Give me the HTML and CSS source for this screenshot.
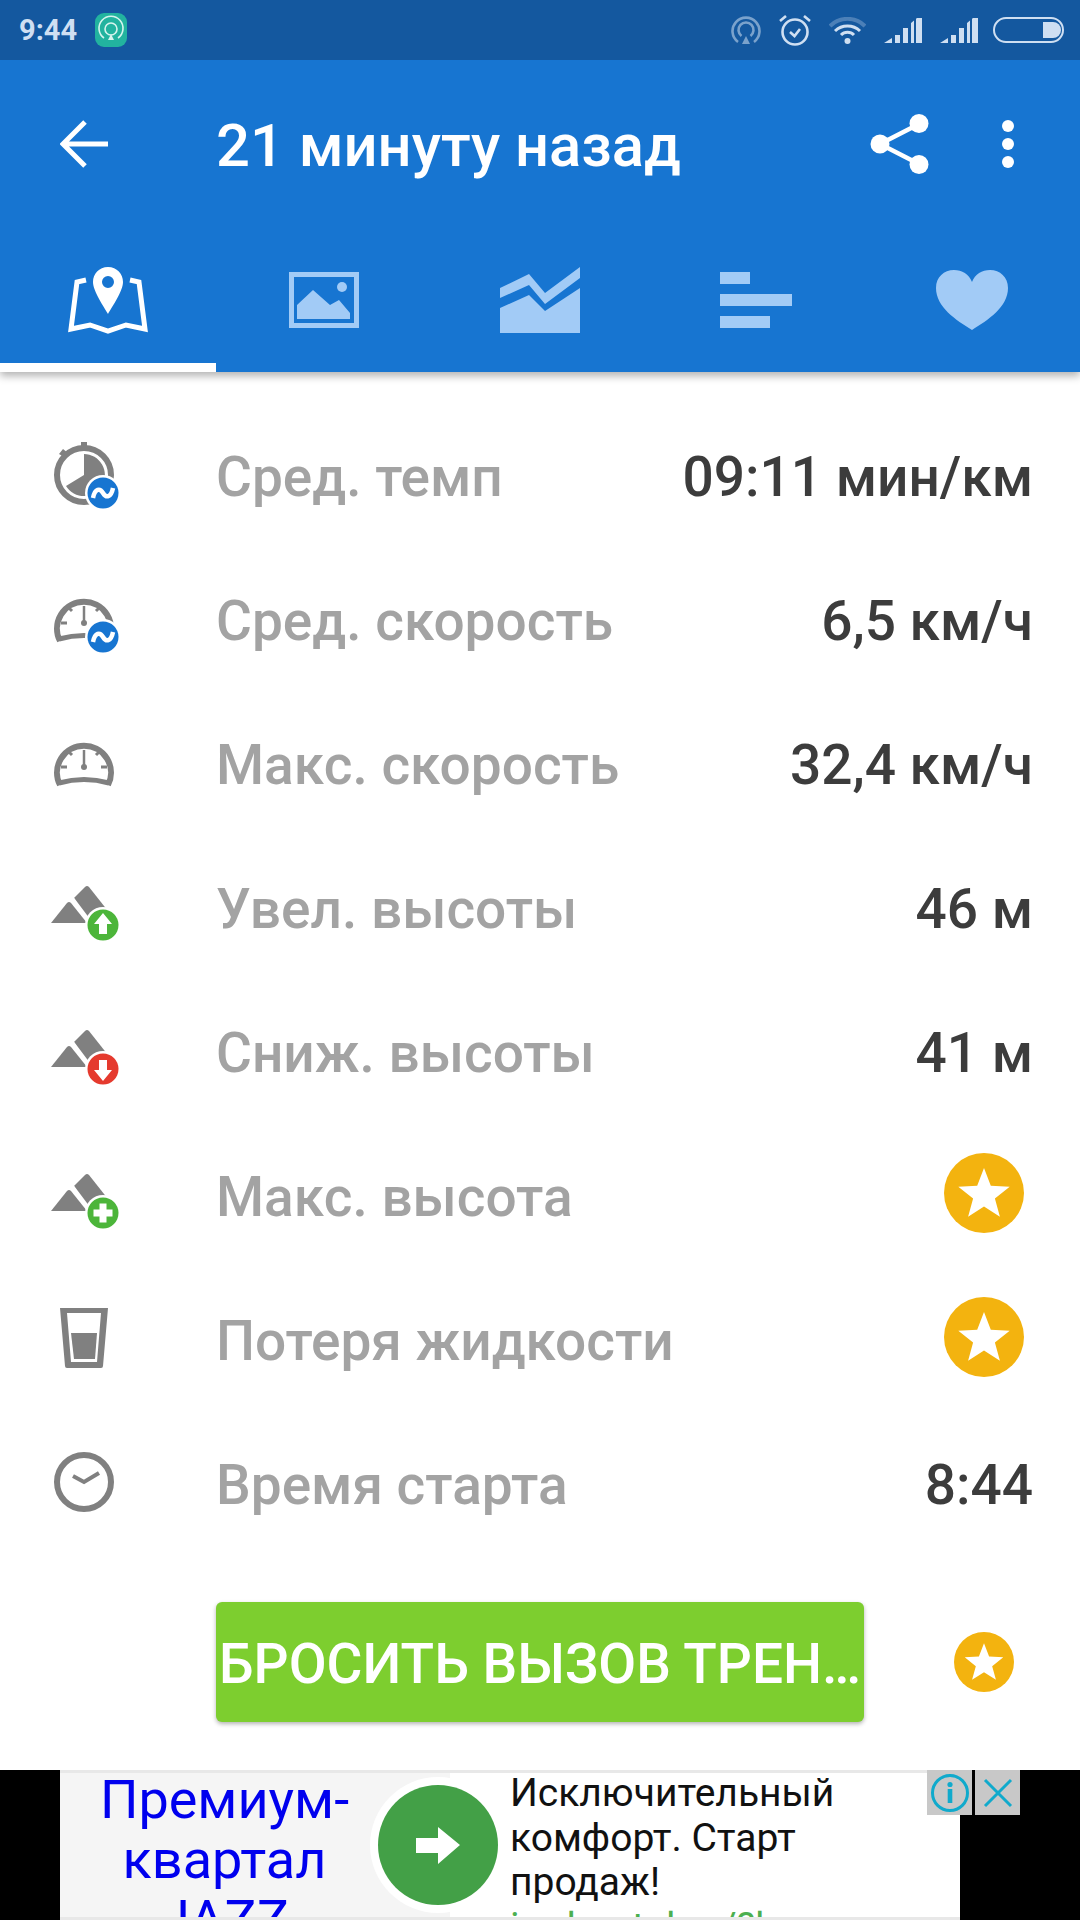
FILE: index.html
```html
<!DOCTYPE html>
<html lang="ru">
<head>
  <meta charset="UTF-8" />
  <meta name="viewport" content="width=device-width, initial-scale=1.0" />
  <title>21 минуту назад</title>
  <link rel="stylesheet" href="styles.css">
</head>
<body>
  <svg class="defs" width="0" height="0">
    <symbol id="gauge" viewBox="0 0 72 72">
      <path d="M12 55 A27 27 0 1 1 60 55" fill="none" stroke="#808080" stroke-width="6"/>
      <path d="M11 53 Q36 46 61 53" fill="none" stroke="#808080" stroke-width="5"/>
      <path d="M36 13V18 M13 37H19 M53 37H59 M20 21L24 25 M52 21L48 25" stroke="#808080" stroke-width="3"/>
      <path d="M36 20V36" stroke="#808080" stroke-width="2.5"/>
      <circle cx="36" cy="37" r="3" fill="#808080"/>
    </symbol>
    <symbol id="mountain" viewBox="0 0 72 72">
      <path d="M26 24 L37 13 Q39 11 41 13 L60 37 L42 50 Z" fill="#808080"/>
      <path d="M19 29 Q21 27 23 29 L39 49 H3 Z" fill="#808080"/>
      <path d="M25 25 L43 49" stroke="#fff" stroke-width="3"/>
    </symbol>
    <symbol id="wave" viewBox="0 0 72 72">
      <circle cx="55" cy="51" r="18" fill="#fff"/>
      <circle cx="55" cy="51" r="15.5" fill="#1775d1"/>
      <path d="M45 56 C47 46 52 46 55 51 C58 56 63 56 65 46" fill="none" stroke="#fff" stroke-width="4.5"/>
    </symbol>
    <symbol id="star" viewBox="0 0 80 80">
      <circle cx="40" cy="40" r="40" fill="#f3b30f"/>
      <polygon fill="#fff" points="40,15 46.8,32.7 65.7,33.7 50.9,45.6 55.9,63.8 40,53.5 24.1,63.8 29.1,45.6 14.3,33.7 33.2,32.7"/>
    </symbol>
    <symbol id="signal" viewBox="0 0 38 25">
      <path d="M0 25 L8 20 V25 Z M11 17 H16 V25 H11 Z M19 10 H24 V25 H19 Z M27 5 L33 0 H38 V25 H27 Z" fill="#cfdff2"/>
      <path d="M31 0 V25" stroke="#14589f" stroke-width="2"/>
    </symbol>
  </svg>

  <div class="app">
    <header class="appbar">
      <div class="statusbar">
        <span class="time">9:44</span>
        <svg class="notif" width="32" height="34" viewBox="0 0 32 34">
          <rect width="32" height="34" rx="9" fill="#22b39f"/>
          <path d="M9 25 A12 12 0 1 1 23 25" fill="none" stroke="#d6f4ee" stroke-width="1.6"/>
          <circle cx="16" cy="16" r="6" fill="none" stroke="#d6f4ee" stroke-width="1.6"/>
          <path d="M13 27 L16 21 L19 27 Z" fill="#d6f4ee"/>
        </svg>
        <div class="status-icons">
          <svg width="30" height="30" viewBox="0 0 30 30" class="dim">
            <path d="M7 27 A13.5 13.5 0 1 1 23 27" fill="none" stroke="#cfdff2" stroke-width="2.6"/>
            <path d="M10.5 21 A7.5 7.5 0 1 1 19.5 21" fill="none" stroke="#cfdff2" stroke-width="2.6"/>
            <path d="M11 29 L15 21 L19 29 Z" fill="#cfdff2"/>
          </svg>
          <svg width="32" height="32" viewBox="0 0 32 32">
            <circle cx="16" cy="18" r="12.5" fill="none" stroke="#cfdff2" stroke-width="2.6"/>
            <path d="M11 18 L15.5 22 L21 15 M1 7 L7 2 M25 2 L31 7" fill="none" stroke="#cfdff2" stroke-width="2.6"/>
          </svg>
          <svg width="37" height="27" viewBox="0 0 37 27">
            <path d="M1 9 A25 25 0 0 1 36 9" fill="none" stroke="#cfdff2" stroke-width="4" opacity=".3"/>
            <path d="M6 14 A18 18 0 0 1 31 14 M12 18 A9 9 0 0 1 25 18" fill="none" stroke="#cfdff2" stroke-width="3"/>
            <circle cx="18.5" cy="24" r="3" fill="#cfdff2"/>
          </svg>
          <svg width="38" height="25"><use href="#signal"/></svg>
          <svg width="38" height="25"><use href="#signal"/></svg>
          <svg class="battery" width="71" height="26" viewBox="0 0 71 26">
            <rect x="1" y="1" width="69" height="24" rx="12" fill="none" stroke="#cfdff2" stroke-width="2"/>
            <path d="M50 5 H60 A8 8 0 0 1 60 21 H50 Z" fill="#cfdff2"/>
          </svg>
        </div>
      </div>

      <div class="toolbar">
        <svg class="back" width="48" height="48" viewBox="0 0 48 48">
          <path d="M48 24H3 M25 2 L3 24 L25 46" fill="none" stroke="#fff" stroke-width="5"/>
        </svg>
        <h1 class="title">21 минуту назад</h1>
        <svg class="share" width="60" height="62" viewBox="0 0 60 62">
          <path d="M49 11 L10 31 L49 51" fill="none" stroke="#fff" stroke-width="4.5"/>
          <circle cx="49" cy="10.5" r="9.5" fill="#fff"/>
          <circle cx="10" cy="31" r="9.5" fill="#fff"/>
          <circle cx="49" cy="51.5" r="9.5" fill="#fff"/>
        </svg>
        <svg class="more" width="12" height="48" viewBox="0 0 12 48">
          <circle cx="6" cy="6" r="6" fill="#fff"/>
          <circle cx="6" cy="24" r="6" fill="#fff"/>
          <circle cx="6" cy="42" r="6" fill="#fff"/>
        </svg>
      </div>

      <nav class="tabs">
        <div class="tab active">
          <svg width="80" height="70" viewBox="0 0 80 70">
            <path d="M18 15 L9 17 L3 64 L22 60 L40 66 L58 60 L77 64 L71 17 L62 15" fill="none" stroke="#fff" stroke-width="5"/>
            <path fill-rule="evenodd" fill="#fff" d="M40 2 C31 2 25 9 25 17 C25 26 36 42 40 49 C44 42 55 26 55 17 C55 9 49 2 40 2 Z M40 11 A6 6 0 1 1 40 23 A6 6 0 1 1 40 11 Z"/>
          </svg>
        </div>
        <div class="tab">
          <svg width="70" height="56" viewBox="0 0 70 56">
            <rect x="2.5" y="2.5" width="65" height="51" fill="none" stroke="#a2cbf6" stroke-width="5"/>
            <circle cx="53" cy="15" r="5" fill="#a2cbf6"/>
            <path d="M8 33 L24 18 L41 33 L50 28 L61 41 V47 H8 Z" fill="#a2cbf6"/>
          </svg>
        </div>
        <div class="tab">
          <svg width="80" height="66" viewBox="0 0 80 66">
            <path d="M0 21 L29 7 L45 26 L80 0 V11 L45 37 L29 18 L0 31 Z" fill="#a2cbf6"/>
            <path d="M0 41 L29 28 L45 44 L80 21 V66 H0 Z" fill="#a2cbf6"/>
          </svg>
        </div>
        <div class="tab">
          <svg width="72" height="56" viewBox="0 0 72 56">
            <path d="M0 0H30V12H0Z M0 22H72V34H0Z M0 44H50V56H0Z" fill="#a2cbf6"/>
          </svg>
        </div>
        <div class="tab">
          <svg width="72" height="60" viewBox="0 0 72 60">
            <path d="M36 60 C20 50 0 37 0 18 C0 7 8 0 18 0 C26 0 33 4 36 12 C39 4 46 0 54 0 C64 0 72 7 72 18 C72 37 52 50 36 60 Z" fill="#a2cbf6"/>
          </svg>
        </div>
      </nav>
    </header>

    <main class="stats">
      <div class="stat-row">
        <div class="stat-icon">
          <svg width="72" height="72" viewBox="0 0 72 72">
            <circle cx="36" cy="33" r="27" fill="none" stroke="#808080" stroke-width="6"/>
            <path d="M33 0H39V6H33Z M11 12 L15 7 L20 11 L16 15 Z" fill="#808080"/>
            <path d="M36 12 A21 21 0 1 1 18 44 L36 33 Z" fill="#808080"/>
            <use href="#wave"/>
          </svg>
        </div>
        <span class="stat-label">Сред. темп</span>
        <span class="stat-value">09:11 мин/км</span>
      </div>
      <div class="stat-row">
        <div class="stat-icon">
          <svg width="72" height="72" viewBox="0 0 72 72"><use href="#gauge"/><use href="#wave"/></svg>
        </div>
        <span class="stat-label">Сред. скорость</span>
        <span class="stat-value">6,5 км/ч</span>
      </div>
      <div class="stat-row">
        <div class="stat-icon">
          <svg width="72" height="72" viewBox="0 0 72 72"><use href="#gauge"/></svg>
        </div>
        <span class="stat-label">Макс. скорость</span>
        <span class="stat-value">32,4 км/ч</span>
      </div>
      <div class="stat-row">
        <div class="stat-icon">
          <svg width="72" height="72" viewBox="0 0 72 72">
            <use href="#mountain"/>
            <circle cx="55" cy="51" r="18" fill="#fff"/>
            <circle cx="55" cy="51" r="15.5" fill="#4cb53a"/>
            <path d="M55 39 L64 50 H59 V60 H51 V50 H46 Z" fill="#fff"/>
          </svg>
        </div>
        <span class="stat-label">Увел. высоты</span>
        <span class="stat-value">46 м</span>
      </div>
      <div class="stat-row">
        <div class="stat-icon">
          <svg width="72" height="72" viewBox="0 0 72 72">
            <use href="#mountain"/>
            <circle cx="55" cy="51" r="18" fill="#fff"/>
            <circle cx="55" cy="51" r="15.5" fill="#e53a2e"/>
            <path d="M55 63 L64 52 H59 V42 H51 V52 H46 Z" fill="#fff"/>
          </svg>
        </div>
        <span class="stat-label">Сниж. высоты</span>
        <span class="stat-value">41 м</span>
      </div>
      <div class="stat-row">
        <div class="stat-icon">
          <svg width="72" height="72" viewBox="0 0 72 72">
            <use href="#mountain"/>
            <circle cx="55" cy="51" r="18" fill="#fff"/>
            <circle cx="55" cy="51" r="15.5" fill="#4cb53a"/>
            <path d="M51.5 41.5 H58.5 V47.5 H64.5 V54.5 H58.5 V60.5 H51.5 V54.5 H45.5 V47.5 H51.5 Z" fill="#fff"/>
          </svg>
        </div>
        <span class="stat-label">Макс. высота</span>
        <svg class="star-big" width="80" height="80"><use href="#star"/></svg>
      </div>
      <div class="stat-row">
        <div class="stat-icon">
          <svg width="72" height="72" viewBox="0 0 72 72">
            <path fill-rule="evenodd" fill="#808080" d="M12 2 H60 L55 60 Q55 62 53 62 H19 Q17 62 17 60 Z M19 7 L23 56 H49 L53 7 Z"/>
            <path d="M23 27 H49 L47 53 H26 Z" fill="#808080"/>
          </svg>
        </div>
        <span class="stat-label">Потеря жидкости</span>
        <svg class="star-big" width="80" height="80"><use href="#star"/></svg>
      </div>
      <div class="stat-row">
        <div class="stat-icon">
          <svg width="72" height="72" viewBox="0 0 72 72">
            <circle cx="36" cy="32" r="27" fill="none" stroke="#808080" stroke-width="6"/>
            <path d="M25 26 L36 32 L51 23" fill="none" stroke="#808080" stroke-width="4"/>
          </svg>
        </div>
        <span class="stat-label">Время старта</span>
        <span class="stat-value">8:44</span>
      </div>

      <div class="challenge-row">
        <button class="challenge">БРОСИТЬ ВЫЗОВ ТРЕН…</button>
        <svg class="star-small" width="60" height="60"><use href="#star"/></svg>
      </div>
    </main>

    <footer class="ad">
      <div class="ad-inner">
        <div class="ad-title">Премиум-<br>квартал<br>JAZZ</div>
        <div class="ad-text">
          Исключительный комфорт. Старт продаж!
          <div class="ad-link">imdomtal.ru/?l</div>
        </div>
        <svg class="ad-go" width="136" height="136" viewBox="0 0 136 136">
          <circle cx="68" cy="68" r="68" fill="#fff"/>
          <circle cx="68" cy="68" r="60" fill="#43a047"/>
          <path d="M46 61 H68 V50 L90 68 L68 87 V76 H46 Z" fill="#fff"/>
        </svg>
      </div>
      <div class="ad-controls">
        <div class="ad-btn">
          <svg width="40" height="40" viewBox="0 0 40 40">
            <circle cx="20" cy="20" r="17.5" fill="none" stroke="#10aacc" stroke-width="3"/>
            <circle cx="20" cy="11.5" r="2.6" fill="#10aacc"/>
            <rect x="17.7" y="16" width="4.6" height="14" fill="#10aacc"/>
          </svg>
        </div>
        <div class="ad-btn">
          <svg width="32" height="32" viewBox="0 0 32 32">
            <path d="M3 3 L29 29 M29 3 L3 29" stroke="#10aacc" stroke-width="3"/>
          </svg>
        </div>
      </div>
    </footer>
  </div>
</body>
</html>
```

FILE: styles.css
```css
body {
  margin: 0;
  padding: 0;
  background: #fff;
  font-family: Roboto, "Liberation Sans", sans-serif;
}

.defs {
  position: absolute;
}

svg {
  display: block;
}

.app {
  width: 1080px;
  height: 1920px;
  display: flex;
  flex-direction: column;
  overflow: hidden;
}

/* Top bar */
.appbar {
  background: #1775d1;
  box-shadow: 0 4px 8px rgba(0,0,0,0.3);
}

.statusbar {
  height: 60px;
  background: #14589f;
  display: flex;
  align-items: center;
  padding: 0 16px 0 19px;
}

.time {
  color: #cfdff2;
  font-size: 29px;
  font-weight: 700;
}

.notif {
  margin-left: 18px;
}

.status-icons {
  margin-left: auto;
  display: flex;
  align-items: center;
  gap: 18px;
}

.status-icons .dim {
  opacity: 0.55;
}

.status-icons .battery {
  margin-left: -3px;
}

.toolbar {
  height: 168px;
  display: flex;
  align-items: center;
  color: #fff;
}

.back {
  margin-left: 60px;
}

.title {
  margin: 4px 0 0 108px;
  flex: 1;
  font-size: 59.7px;
  font-weight: 500;
}

.share {
  margin-right: 72px;
}

.more {
  margin-right: 66px;
}

.tabs {
  height: 144px;
  display: flex;
}

.tab {
  width: 216px;
  display: flex;
  align-items: center;
  justify-content: center;
  box-sizing: border-box;
}

.tab.active {
  border-bottom: 9px solid #fff;
  padding-top: 9px;
}

/* Stat rows */
.stats {
  padding-top: 34px;
}

.stat-row {
  height: 144px;
  display: flex;
  align-items: center;
  padding-right: 47px;
}

.stat-icon {
  width: 216px;
  padding-left: 48px;
  box-sizing: border-box;
}

.stat-label {
  flex: 1;
  font-size: 55px;
  font-weight: 500;
  color: #a3a3a3;
  margin-bottom: 2px;
}

.stat-value {
  font-size: 55px;
  font-weight: 500;
  color: #3c3c3c;
  margin-bottom: 2px;
}

.star-big {
  margin: 0 9px 10px 0;
}

.challenge-row {
  margin-top: 32px;
  height: 144px;
  display: flex;
  align-items: center;
  padding-left: 216px;
}

.challenge {
  width: 648px;
  height: 120px;
  padding: 4px 0 0;
  border: none;
  border-radius: 6px;
  background: #7dce2f;
  color: #fff;
  font-family: inherit;
  font-size: 55px;
  font-weight: 500;
  white-space: nowrap;
  box-shadow: 0 2px 4px rgba(0,0,0,0.3);
}

.star-small {
  margin-left: 90px;
}

/* Ad banner */
.ad {
  margin-top: auto;
  height: 150px;
  background: #000;
  padding: 0 120px 0 60px;
  position: relative;
}

.ad-inner {
  height: 150px;
  box-sizing: border-box;
  display: flex;
  position: relative;
  overflow: hidden;
  background: #fff;
  border-top: 3px solid #e8e8e8;
  border-bottom: 3px solid #e8e8e8;
}

.ad-title {
  width: 390px;
  flex: none;
  box-sizing: border-box;
  margin-top: -3px;
  padding: 0 61px 0 0;
  background: #f5f5f5;
  color: #0000ee;
  font-size: 54px;
  line-height: 60px;
  text-align: center;
}

.ad-text {
  margin: -2px 0 0 60px;
  width: 370px;
  color: #111;
  font-size: 39px;
  line-height: 44.5px;
}

.ad-link {
  color: #4caf50;
  white-space: nowrap;
}

.ad-go {
  position: absolute;
  left: 310px;
  top: 4px;
}

.ad-controls {
  position: absolute;
  top: 0;
  left: 927px;
  display: flex;
  gap: 3px;
}

.ad-btn {
  width: 45px;
  height: 45px;
  background: #c8c8c8;
  display: flex;
  align-items: center;
  justify-content: center;
}
```
